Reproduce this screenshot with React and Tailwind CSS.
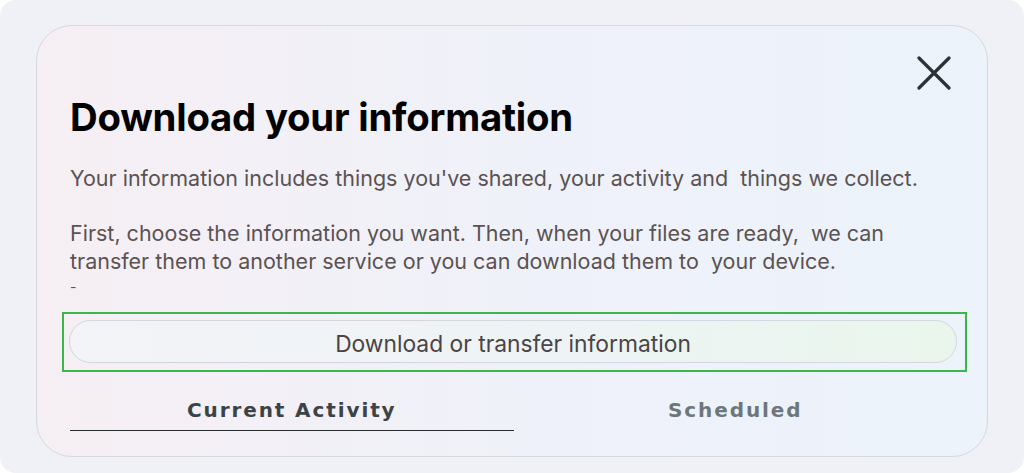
export default function App() {
  return (
    <div className="h-[473px] w-[1024px] bg-white">
      <div className="flex h-full w-full flex-col rounded-[16px] bg-[#eff1f6] px-[36px] pt-[25px] pb-[16px]">
        <div className="flex flex-1 flex-col rounded-[36px] border border-[#d7d8dc] bg-gradient-to-r from-[#f6eff4] via-[#eff1f9] to-[#ecf3fb] pl-[33px] pr-[20px] font-['Inter',sans-serif]">
          <div className="flex justify-end pt-[30px] pr-[16px]">
            <svg width="34" height="34" viewBox="0 0 34 34" className="text-[#2b3236]">
              <path d="M2 2 L32 32 M32 2 L2 32" stroke="currentColor" strokeWidth="3.2" strokeLinecap="round" />
            </svg>
          </div>
          <h1 className="mt-[5px] text-[38.3px] font-bold leading-[44px] tracking-[-0.2px] text-black">
            Download your information
          </h1>
          <div className="mt-[25px] text-[21.5px] leading-[28px] text-[#5b5252]">
            <p className="whitespace-pre">Your information includes things you've shared, your activity and  things we collect.</p>
            <p className="mt-[27px] whitespace-pre">First, choose the information you want. Then, when your files are ready,  we can</p>
            <p className="whitespace-pre">transfer them to another service or you can download them to  your device.</p>
            <p className="mt-[2px] text-[14px] leading-[20px]">-</p>
          </div>
          <div className="-ml-[8px] mt-[15px] border-2 border-[#3cb54a] px-[5px] pt-[6px] pb-[7px]">
            <div className="mr-[3px] flex h-[43px] items-center justify-center rounded-full border border-[#d3d6de] bg-gradient-to-r from-[#f3f3f8] via-[#eef3f6] to-[#eaf6ec]">
              <span className="pt-[6px] text-[22.8px] text-[#4a4444]">Download or transfer information</span>
            </div>
          </div>
          <div className="mt-[23px] flex pr-[10px] font-['DejaVu_Sans',sans-serif] text-[20px] font-bold tracking-[1.9px]">
            <div className="flex-1 border-b border-[#2a2d30] pb-[5px] text-center text-[#3c4347]">
              Current Activity
            </div>
            <div className="flex-1 pb-[5px] text-center text-[#6d767a]">Scheduled</div>
          </div>
        </div>
      </div>
    </div>
  );
}
